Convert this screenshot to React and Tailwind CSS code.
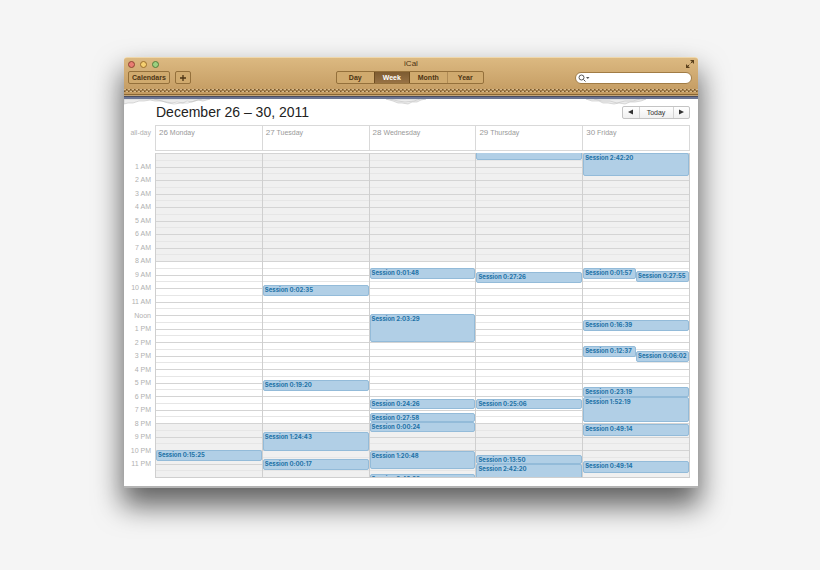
import React from 'react'

const HOURS = [
    '1 AM', '2 AM', '3 AM', '4 AM', '5 AM', '6 AM', '7 AM', '8 AM', '9 AM', '10 AM', '11 AM', 'Noon',
    '1 PM', '2 PM', '3 PM', '4 PM', '5 PM', '6 PM', '7 PM', '8 PM', '9 PM', '10 PM', '11 PM',
]

// start and span are in hours, half is the side taken when two sessions overlap
const DAYS = [
    {
        date: '26', name: 'Monday',
        sessions: [{ label: '0:15:25', start: 22.0, span: 0.8 }],
    },
    {
        date: '27', name: 'Tuesday',
        sessions: [
            { label: '0:02:35', start: 9.8, span: 0.8 },
            { label: '0:19:20', start: 16.8, span: 0.8 },
            { label: '1:24:43', start: 20.65, span: 1.4 },
            { label: '0:00:17', start: 22.7, span: 0.8 },
        ],
    },
    {
        date: '28', name: 'Wednesday',
        sessions: [
            { label: '0:01:48', start: 8.55, span: 0.8 },
            { label: '2:03:29', start: 11.95, span: 2.08 },
            { label: '0:24:26', start: 18.2, span: 0.8 },
            { label: '0:27:58', start: 19.25, span: 0.7 },
            { label: '0:00:24', start: 19.9, span: 0.75 },
            { label: '1:20:48', start: 22.05, span: 1.35 },
            { label: '0:42:20', start: 23.8, span: 0.8 },
        ],
    },
    {
        date: '29', name: 'Thursday',
        sessions: [
            { label: '', start: -1, span: 1.55 },
            { label: '0:27:26', start: 8.8, span: 0.8 },
            { label: '0:25:06', start: 18.2, span: 0.8 },
            { label: '0:13:50', start: 22.35, span: 0.7 },
            { label: '2:42:20', start: 23.0, span: 2 },
        ],
    },
    {
        date: '30', name: 'Friday',
        sessions: [
            { label: '2:42:20', start: 0, span: 1.7 },
            { label: '0:01:57', start: 8.5, span: 0.8, half: 'left' },
            { label: '0:27:55', start: 8.75, span: 0.8, half: 'right' },
            { label: '0:16:39', start: 12.35, span: 0.8 },
            { label: '0:12:37', start: 14.3, span: 0.8, half: 'left' },
            { label: '0:06:02', start: 14.65, span: 0.8, half: 'right' },
            { label: '0:23:19', start: 17.35, span: 0.75 },
            { label: '1:52:19', start: 18.1, span: 1.85 },
            { label: '0:49:14', start: 20.1, span: 0.85 },
            { label: '0:49:14', start: 22.85, span: 0.85 },
        ],
    },
]

const Light = ({ color, label }) => (
    <button aria-label={label} className={`size-[7px] rounded-full border ${color}`} />
)

const Session = ({ session }) => {
    const side = session.half === 'left' ? 'left-0 w-1/2' : session.half === 'right' ? 'left-1/2 w-1/2' : 'inset-x-0'
    return (
        <div
            className={`absolute ${side} whitespace-nowrap rounded-[2px] border border-[#93bbd9] bg-[#b1cfe6] pl-px font-['Inter','Liberation_Sans',sans-serif] text-[6px] leading-[8px] font-bold text-[#2272a6] [font-feature-settings:'calt'_0]`}
            style={{ top: `${(session.start / 24) * 100}%`, height: `${(session.span / 24) * 100}%` }}
        >
            {session.label && `Session ${session.label}`}
        </div>
    )
}

const Toolbar = () => (
    <header className="rounded-t-[3px] border-t border-[#efd8ac] bg-linear-to-b from-[#dcb981] to-[#bf965c] text-[7px] text-[#4c3414]">
        <div className="grid h-3 grid-cols-3 items-center px-1">
            <div className="flex gap-[5px]">
                <Light label="Close" color="border-[#8f4432] bg-[#e97c72]" />
                <Light label="Minimize" color="border-[#9a6d2b] bg-[#f5cf70]" />
                <Light label="Zoom" color="border-[#577a3a] bg-[#9bd180]" />
            </div>
            <h1 className="text-center text-[8px] leading-3">iCal</h1>
            <button aria-label="Full screen" className="justify-self-end">
                <svg viewBox="0 0 8 8" className="size-2" fill="#5a401c" stroke="#5a401c">
                    <path d="M4 0H8v4ZM0 4V8h4Z" stroke="none" />
                    <path d="M4.700 3.300 6.500 1.500M3.300 4.700 1.500 6.500" />
                </svg>
            </button>
        </div>
        <div className="grid grid-cols-[1fr_auto_1fr] items-center pt-px pr-[6px] pl-1 font-bold">
            <div className="flex gap-[5px]">
                <button className="h-[13px] rounded-[2px] border border-[#94703b] bg-[#d0aa6e] px-[3px] leading-[11px]">Calendars</button>
                <button aria-label="Add event" className="flex h-[13px] w-4 items-center justify-center rounded-[2px] border border-[#94703b] bg-[#d0aa6e]">
                    <svg viewBox="0 0 6 6" className="size-[6px]" stroke="#4c3414" strokeWidth="1.300"><path d="M3 0v6M0 3h6" /></svg>
                </button>
            </div>
            <div className="grid h-[13px] w-[148px] grid-cols-4 overflow-hidden rounded-[2px] border border-[#94703b] bg-[#d0aa6e] leading-[11px]">
                <button>Day</button>
                <button className="border-x border-[#6d4c20] bg-linear-to-b from-[#7d5b30] to-[#987245] text-white">Week</button>
                <button>Month</button>
                <button className="border-l border-[#b08b55]">Year</button>
            </div>
            <label className="flex h-3 w-[117px] items-center justify-self-end rounded-full border border-[#a17c45] bg-white pl-[2px]">
                <svg viewBox="0 0 12 8" className="h-2 w-3 shrink-0" fill="none" stroke="#555">
                    <circle cx="3.500" cy="3.500" r="2.500" />
                    <path d="m5.500 5.500 2 2" />
                    <path d="M8 3h3.500L9.750 5Z" fill="#555" stroke="none" />
                </svg>
                <input aria-label="Search" className="min-w-0 flex-1 bg-transparent outline-none" />
            </label>
        </div>
        <svg className="mt-[3px] block h-[6px] w-full" aria-hidden="true">
            <defs>
                <pattern id="stitch" width="4" height="6" patternUnits="userSpaceOnUse">
                    <path d="M0 3.500h4" stroke="#a17d4b" strokeWidth="3" />
                    <path d="M0 2.500h2M2 4.500h2" stroke="#d6b98a" />
                    <path d="M2 2.500h1M0 4.500h1" stroke="#76562c" />
                </pattern>
            </defs>
            <rect width="100%" height="6" fill="url(#stitch)" />
        </svg>
        <div className="mt-px border-t border-[#8a6634] bg-[#c4a678] pt-px">
            <div className="h-[3px] border-t border-[#4a4d60] bg-[#6b7594]" />
        </div>
    </header>
)

const TornPaper = () => (
    <div className="flex h-[5px] justify-between pr-[52px]" aria-hidden="true">
        <svg viewBox="0 0 86 7" className="h-[7px] w-[86px]" fill="#ececec" stroke="#c2c2c2" strokeWidth=".6">
            <path d="M0 0h86l-7 2-5-1-6 2-5-1-4 2-6-1-5 1-6-1-5-1-6 0-5-1-6 1-5 0-6 2-5 0-4 1Z" />
            <path d="M30 0l8 2 6 2 6 1 7-1 7 0 6-2 8-2" fill="none" />
        </svg>
        <svg viewBox="0 0 44 7" className="ml-4 h-[7px] w-11" fill="#ececec" stroke="#c2c2c2" strokeWidth=".6">
            <path d="M2 0h40l-5 1-4 2-5 0-4 2-6-1-4 0-5-2Z" />
            <path d="M6 0l8 2 7 1 9-1 6-2" fill="none" />
        </svg>
        <svg viewBox="0 0 60 7" className="h-[7px] w-[60px]" fill="#ececec" stroke="#c2c2c2" strokeWidth=".6">
            <path d="M0 0h60l-5 2-6 1-5 0-5 2-6-1-5 1-6-1-5 0-4-2-7 0Z" />
            <path d="M8 0l8 2 8 0 7 2 8-2 8 0 7-2" fill="none" />
        </svg>
    </div>
)

export default function App() {
    return (
        <main className="min-h-screen bg-[#f5f5f5] pt-[57px] pr-[122px] pb-20 pl-[124px] font-['Liberation_Sans',sans-serif]">
            <div className="rounded-t-[3px] border-b-2 border-[#b4b4b4] bg-white shadow-[0_16px_28px_2px_rgba(0,0,0,0.6)]">
                <Toolbar />
                <TornPaper />
                <div className="flex items-center justify-between pr-2 pl-8">
                    <h2 className="text-[14px] leading-[16px] text-[#222]">December 26 – 30, 2011</h2>
                    <div className="grid h-[13px] w-[68px] grid-cols-[1fr_35px_1fr] rounded-[2px] border border-[#c4c4c4] bg-linear-to-b from-white to-[#f0f0f0] text-[7px] leading-[11px] text-[#333]">
                        <button aria-label="Previous week" className="flex items-center justify-center">
                            <svg viewBox="0 0 5 6" className="h-[6px] w-[5px]" fill="#333"><path d="M5 0.500v5L0 3Z" /></svg>
                        </button>
                        <button className="border-x border-[#d4d4d4]">Today</button>
                        <button aria-label="Next week" className="flex items-center justify-center">
                            <svg viewBox="0 0 5 6" className="h-[6px] w-[5px]" fill="#333"><path d="M0 0.500v5l5-2.500Z" /></svg>
                        </button>
                    </div>
                </div>
                <div className="mt-[5px] grid grid-cols-[31px_1fr] pr-2 pb-2 text-[7px] text-[#999]">
                    <div className="pt-[3px] pr-1 text-right leading-[9px] text-[#b0b0b0]">all-day</div>
                    <div className="mb-[2px] grid h-[26px] grid-cols-5 border-y border-l border-[#d9d9d9]">
                        {DAYS.map((day) => (
                            <div key={day.date} className="border-r border-[#d9d9d9] pt-[2px] pl-[3px] leading-[9px]">
                                <span className="text-[8px]">{day.date}</span> {day.name}
                            </div>
                        ))}
                    </div>
                    <div className="grid h-[325px] grid-rows-24 pr-1 text-right text-[#b0b0b0]">
                        <span />
                        {HOURS.map((hour) => (
                            <div key={hour} className="-mt-1 leading-[8px]">{hour}</div>
                        ))}
                    </div>
                    <div className="relative grid h-[325px] grid-cols-5 overflow-hidden border-b border-l border-[#cfcfcf]">
                        <div className="absolute inset-0 grid grid-rows-24">
                            {Array.from({ length: 24 }, (_, i) => (
                                <div key={i} className={`flex flex-col justify-center border-t border-[#d4d4d4] ${i < 8 || i >= 20 ? 'bg-[#f0f0f0]' : 'bg-white'}`}>
                                    <div className="border-t border-[#e6e6e6]" />
                                </div>
                            ))}
                        </div>
                        {DAYS.map((day) => (
                            <div key={day.date} className="relative border-r border-[#cfcfcf]">
                                {day.sessions.map((session) => (
                                    <Session key={session.start} session={session} />
                                ))}
                            </div>
                        ))}
                    </div>
                </div>
            </div>
        </main>
    )
}
